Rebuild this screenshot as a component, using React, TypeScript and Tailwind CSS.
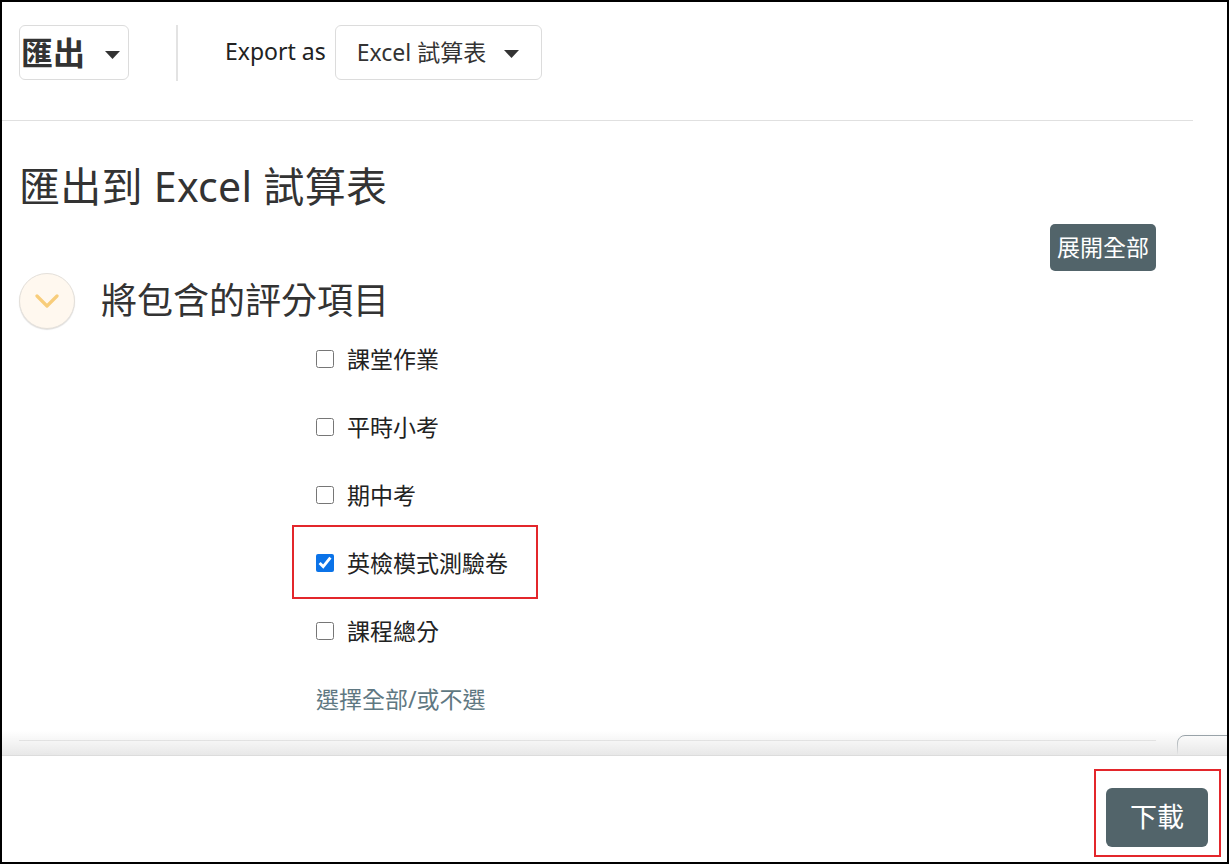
import React, { useState } from 'react';

const Caret: React.FC<{ className?: string }> = ({ className }) => (
  <svg className={className} width="15" height="8" viewBox="0 0 15 8">
    <polygon points="0,0 15,0 7.5,8" fill="#333" />
  </svg>
);

const Chevron: React.FC = () => (
  <svg width="24" height="14" viewBox="0 0 24 14" fill="none">
    <path d="M2 2 L12 12 L22 2" stroke="#f8cd7b" strokeWidth="3.2" strokeLinecap="round" strokeLinejoin="round" />
  </svg>
);

const items = ['課堂作業', '平時小考', '期中考', '英檢模式測驗卷', '課程總分'];

const App: React.FC = () => {
  const [checked, setChecked] = useState<boolean[]>([false, false, false, true, false]);

  const toggle = (i: number) => {
    setChecked((prev) => prev.map((v, j) => (j === i ? !v : v)));
  };

  const toggleAll = () => {
    const all = checked.every(Boolean);
    setChecked(checked.map(() => !all));
  };

  return (
    <div className="h-[864px] w-full border-2 border-black bg-white flex flex-col overflow-hidden font-['Noto_Sans','Noto_Sans_CJK_TC',sans-serif] text-[#333]">
      <div className="relative flex-1 overflow-hidden">
        {/* toolbar */}
        <div className="h-[119px] w-[1191px] border-b border-[#e0e0e0] flex items-start pt-[23px] pl-[17px]">
          <div className="h-[55px] flex items-center">
            <button
              type="button"
              className="h-[55px] w-[110px] flex items-center pl-[1px] rounded-md border border-[#dcdcdc] text-[32px] font-bold leading-none text-[#333]"
            >
              匯出
              <Caret className="ml-[20px] mt-[4px]" />
            </button>
            <div className="ml-[47px] w-[2px] h-[56px] bg-[#e3e3e3]" />
            <span className="ml-[47px] text-[23px] text-[#222] mb-[2px]">Export as</span>
            <button
              type="button"
              className="ml-[9px] h-[55px] w-[207px] flex items-center pl-[21px] rounded-md border border-[#dcdcdc] text-[23px] text-[#333]"
            >
              Excel 試算表
              <Caret className="ml-[18px] mt-[2px]" />
            </button>
          </div>
        </div>

        <div className="ml-[17px] w-[1137px]">
          <h1 className="mt-[41px] text-[41px] leading-[48px] text-[#333] tracking-[0.3px]">匯出到 Excel 試算表</h1>

          <div className="mt-[14px] flex justify-end">
            <button
              type="button"
              className="h-[47px] px-[7px] rounded-[5px] bg-[#52646a] text-white text-[23px]"
            >
              展開全部
            </button>
          </div>

          {/* section header */}
          <div className="mt-[2px] h-[56px] flex items-center">
            <div className="w-[56px] h-[56px] rounded-full bg-[#fff8ef] border border-[#e4e0da] shadow-[0_1px_1px_rgba(0,0,0,0.12)] flex items-center justify-center">
              <Chevron />
            </div>
            <h2 className="ml-[26px] text-[36px] leading-none text-[#333]">將包含的評分項目</h2>
          </div>

          {/* checkbox list */}
          <div className="ml-[297px] mt-[-4px] flex flex-col">
            {items.map((label, i) => (
              <label key={label} className="relative h-[68px] flex items-center gap-[13px] cursor-pointer">
                {i === 3 && (
                  <span className="absolute left-[-24px] top-[-4px] bottom-[-2px] w-[246px] border-2 border-[#e3262b] pointer-events-none" />
                )}
                <input
                  type="checkbox"
                  checked={checked[i]}
                  onChange={() => toggle(i)}
                  className="w-[18px] h-[18px] m-0 accent-[#0b73e8]"
                />
                <span className="text-[23px] text-[#222]">{label}</span>
              </label>
            ))}
            <div className="h-[68px] flex items-center">
              <button type="button" onClick={toggleAll} className="text-[23px] text-[#5f7882]">
                選擇全部/或不選
              </button>
            </div>
          </div>

          <div className="mt-[7px] border-t border-[#dedede]" />
          <div className="mt-[12px] w-[56px] h-[56px] rounded-full bg-[#f4f4f4] border border-[#e0e0e0]" />
        </div>

        {/* floating box peeking at right */}
        <div className="absolute left-[1175px] top-[733px] w-[80px] h-[40px] border border-[#87939a] rounded-tl-lg bg-white" />
        <div className="absolute bottom-0 left-0 right-0 h-[24px] bg-linear-to-b from-white/0 to-[#e8e8e8]" />
      </div>

      {/* footer */}
      <div className="h-[107px] border-t border-[#dcdcdc] flex justify-end items-start pt-[13px] pr-[6px] bg-white">
        <div className="border-2 border-[#e3262b] pt-[17px] pb-[8px] pl-[10px] pr-[11px]">
          <button
            type="button"
            className="w-[102px] h-[59px] rounded-md bg-[#52646a] text-white text-[27px]"
          >
            下載
          </button>
        </div>
      </div>
    </div>
  );
};

export default App;
